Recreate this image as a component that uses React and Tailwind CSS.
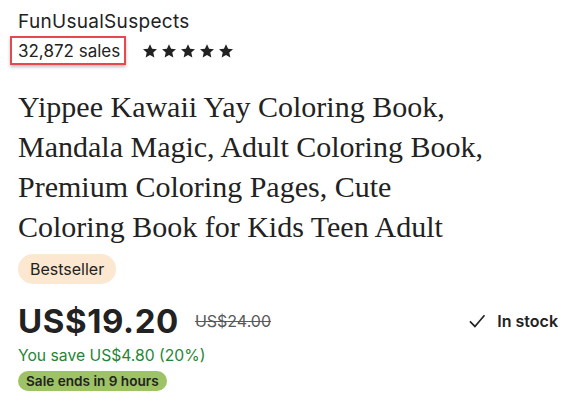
import React from 'react';

const Star = () => (
    <svg width="16" height="16" viewBox="0 0 24 24" className="fill-[#222]">
        <path d="M12 1.8l3.1 6.9 7.4.7-5.6 5 1.6 7.4L12 18l-6.5 3.8 1.6-7.4-5.6-5 7.4-.7z" />
    </svg>
);

const Check = () => (
    <svg width="20" height="20" viewBox="0 0 24 24" fill="none" stroke="#222" strokeWidth="2">
        <path d="M3.5 12.5l6 6L21 5" />
    </svg>
);

const App = () => {
    return (
        <div className="w-[582px] h-[408px] overflow-hidden bg-white pl-[18px] pt-[10px] text-[#222] font-['Inter',sans-serif]">
            <div className="text-[19px] leading-[24px] tracking-[0.3px]">FunUsualSuspects</div>

            <div className="mt-[4px] flex items-center h-[26px]">
                <span className="relative text-[17px] leading-[26px]">
                    32,872 sales
                    {/* annotation box */}
                    <span className="absolute -left-[8px] -right-[6px] -top-[2px] -bottom-[1px] border-2 border-[#e5484d] shadow-[0_2px_3px_rgba(0,0,0,0.25)]" />
                </span>
                <div className="ml-[22px] flex items-center gap-[3px]">
                    <Star /><Star /><Star /><Star /><Star />
                </div>
            </div>

            <h1 className="mt-[23px] w-[475px] text-[30px] leading-[40px] font-['Liberation_Serif',serif] font-normal">
                Yippee Kawaii Yay Coloring Book, Mandala Magic, Adult Coloring Book, Premium Coloring Pages, Cute Coloring Book for Kids Teen Adult
            </h1>

            <div className="mt-[7px] inline-flex items-center h-[30px] px-[12px] rounded-full bg-[#fce7d0] text-[16px]">
                Bestseller
            </div>

            <div className="mt-[17px] flex items-center justify-between pr-[24px] h-[40px]">
                <div className="flex items-center">
                    <span className="text-[33px] leading-[40px] font-bold tracking-[0.6px]">US$19.20</span>
                    <span className="ml-[16px] text-[16px] line-through text-[#595959]">US$24.00</span>
                </div>
                <div className="flex items-center gap-[10px]">
                    <Check />
                    <span className="text-[16px] font-semibold">In stock</span>
                </div>
            </div>

            <div className="mt-[5px] text-[15.7px] leading-[20px] text-[#258635]">You save US$4.80 (20%)</div>

            <div className="mt-[5px] inline-flex items-center h-[20px] px-[8px] rounded-full bg-[#9ec266] text-[13.6px] font-semibold">
                Sale ends in 9 hours
            </div>
        </div>
    );
};

export default App;
